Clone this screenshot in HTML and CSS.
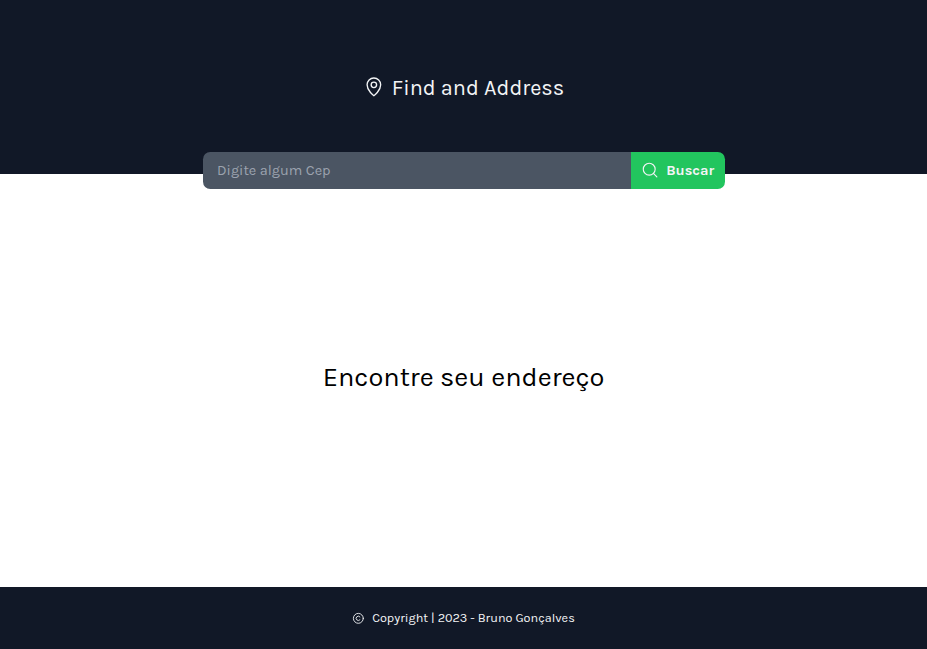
FILE: index.html
```html
<!DOCTYPE html>
<html lang="pt-BR">
<head>
<meta charset="utf-8">
<title>Find and Address</title>
<link rel="stylesheet" href="styles.css">
</head>
<body>
<header class="header">
  <div class="brand">
    <svg class="brand-icon" viewBox="0 0 256 256" fill="none" stroke="currentColor" stroke-width="16" stroke-linecap="round" stroke-linejoin="round"><circle cx="128" cy="104" r="32"/><path d="M208 104c0 72-80 128-80 128s-80-56-80-128a80 80 0 0 1 160 0Z"/></svg>
    <h1 class="brand-name">Find and Address</h1>
  </div>
  <form class="search">
    <input class="search-input" type="text" placeholder="Digite algum Cep">
    <button class="search-button" type="button">
      <svg class="search-icon" viewBox="0 0 256 256" fill="none" stroke="currentColor" stroke-width="16" stroke-linecap="round"><circle cx="116" cy="116" r="84"/><path d="m175.400 175.400 48.600 48.600"/></svg>
      <span class="search-label">Buscar</span>
    </button>
  </form>
</header>
<main class="main"><h2 class="message">Encontre seu endereço</h2></main>
<footer class="footer">
  <svg class="copy-icon" viewBox="0 0 256 256" fill="none" stroke="currentColor" stroke-width="18" stroke-linecap="round"><circle cx="128" cy="128" r="100"/><path d="M160 158a44 44 0 1 1 0-60"/></svg>
  <span class="copy-text">Copyright | 2023 - Bruno Gonçalves</span>
</footer>
</body>
</html>
```
FILE: styles.css
```css
* { box-sizing: border-box; }
html { font-size: 14.5px; }
body { margin: 0; height: 100vh; display: flex; flex-direction: column; font-family: Karla, "Noto Sans", sans-serif; background: #fff; color: #000; }
h1, h2 { margin: 0; font-weight: 400; white-space: nowrap; }
.header { height: 12rem; flex: none; background: #111827; color: #f3f4f6; display: flex; flex-direction: column; align-items: center; }
.brand { height: 152px; padding-top: 22px; display: flex; align-items: center; gap: .5rem; flex: none; }
.brand-icon { width: 1.5rem; height: 1.5rem; margin-bottom: 1px; }
.brand-name { font-size: 1.5rem; line-height: 2rem; }
.search { display: flex; width: 36rem; height: 37px; flex: none; }
.search-input { flex: 1; min-width: 0; height: 37px; border: 0; border-radius: .5rem 0 0 .5rem; padding: 0 1rem; background: #4b5563; color: #f3f4f6; font: 1rem Karla, "Noto Sans", sans-serif; }
.search-input::placeholder { color: #9ca3af; opacity: 1; }
.search-button { width: 94px; border: 0; border-radius: 0 .5rem .5rem 0; padding: 0 0 0 10px; display: flex; align-items: center; gap: .52rem; background: #22c55e; color: #f3f4f6; font: 700 1rem Karla, "Noto Sans", sans-serif; }
.search-icon { width: 1.25rem; height: 1.25rem; flex: none; margin-bottom: 1px; }
.main { flex: 1; display: flex; align-items: center; justify-content: center; padding-bottom: 6px; }
.message { font-size: 1.875rem; line-height: 2.25rem; }
.footer { height: 62px; flex: none; background: #111827; color: #f3f4f6; display: flex; align-items: center; justify-content: center; gap: .5rem; font-size: .875rem; }
.copy-icon { width: 1em; height: 1em; margin-top: 1px; }
.copy-text { margin-bottom: 2px; }
```
